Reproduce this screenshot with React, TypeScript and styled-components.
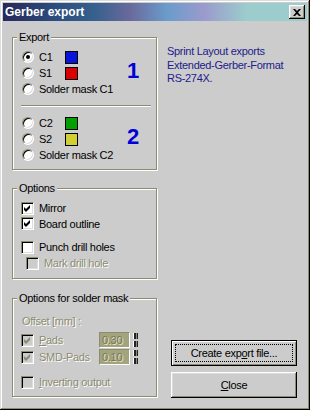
import React from 'react';
import styled, { createGlobalStyle } from 'styled-components';

const face = '#cccccc';
const shade = '#8c8c70';
const hilite = '#ffffff';

const GlobalStyle = createGlobalStyle`
  html, body {
    margin: 0;
    padding: 0;
    background: ${face};
  }
  body {
    font-family: "Liberation Sans", Arial, sans-serif;
    font-size: 11px;
    color: #000;
  }
`;

const Window = styled.div`
  width: 310px;
  height: 410px;
  box-sizing: border-box;
  padding: 3px;
  display: flex;
  flex-direction: column;
  background: ${face};
  box-shadow: inset -1px -1px 0 #000, inset 1px 1px 0 #dcdcdc,
    inset -2px -2px 0 ${shade}, inset 2px 2px 0 ${hilite};
  letter-spacing: -0.3px;
`;

const TitleBar = styled.div`
  height: 18px;
  flex: none;
  display: flex;
  align-items: center;
  justify-content: space-between;
  padding: 0 2px 0 2px;
  background: linear-gradient(
    90deg,
    #28285a 0%,
    #2c4f80 18%,
    #36608e 30%,
    #6a6a9c 42%,
    #6a9ccc 54%,
    #9a9acc 66%,
    #9ccccc 80%,
    #9ccccc 100%
  );
`;

const Title = styled.span`
  color: #fff;
  font-weight: bold;
  font-size: 12px;
  letter-spacing: 0;
`;

const CloseBox = styled.span`
  width: 16px;
  height: 14px;
  display: flex;
  align-items: center;
  justify-content: center;
  background: ${face};
  box-shadow: inset -1px -1px 0 #000, inset 1px 1px 0 ${hilite},
    inset -2px -2px 0 ${shade}, inset 2px 2px 0 #dcdcdc;
`;

const Body = styled.div`
  flex: 1;
  display: flex;
  padding: 10px 0 9px 9px;
  min-height: 0;
`;

const LeftCol = styled.div`
  width: 145px;
  display: flex;
  flex-direction: column;
`;

const Group = styled.fieldset<{ $top?: number }>`
  margin: ${p => p.$top ?? 0}px 0 0 0;
  padding: 0;
  min-width: 0;
  border: 1px solid ${shade};
  box-shadow: inset 1px 1px 0 ${hilite}, 1px 1px 0 ${hilite};
`;

const Legend = styled.legend`
  margin-left: 4px;
  padding: 0 2px;
  line-height: 13px;
  background: ${face};
`;

const Inner = styled.div<{ $pad: string }>`
  padding: ${p => p.$pad};
  display: flex;
  flex-direction: column;
`;

const Section = styled.div`
  display: flex;
`;

const List = styled.div`
  flex: 1;
  display: flex;
  flex-direction: column;
`;

const BigNum = styled.div`
  width: 24px;
  margin-right: 6px;
  padding-top: 11px;
  font-size: 22px;
  font-weight: bold;
  line-height: 22px;
  text-align: center;
  color: #0000d8;
  letter-spacing: 0;
`;

const Divider = styled.div`
  margin: 8px 0 8px -1px;
  border-top: 1px solid ${shade};
  border-bottom: 1px solid ${hilite};
`;

const Row = styled.div<{ $h?: number; $mt?: number; $indent?: number }>`
  height: ${p => p.$h ?? 16}px;
  margin-top: ${p => p.$mt ?? 0}px;
  padding-left: ${p => p.$indent ?? 0}px;
  display: flex;
  align-items: center;
  white-space: nowrap;
`;

const Radio = styled.span<{ $checked?: boolean }>`
  width: 12px;
  height: 12px;
  flex: none;
  box-sizing: border-box;
  border-radius: 50%;
  background: #fff;
  border: 1px solid;
  border-color: ${shade} ${hilite} ${hilite} ${shade};
  box-shadow: inset 1px 1px 0 #000, inset -1px -1px 0 #dcdcdc;
  display: flex;
  align-items: center;
  justify-content: center;

  &::after {
    content: '';
    width: 4px;
    height: 4px;
    border-radius: 50%;
    background: #000;
    display: ${p => (p.$checked ? 'block' : 'none')};
  }
`;

const Box = styled.span<{ $disabled?: boolean }>`
  width: 13px;
  height: 13px;
  flex: none;
  box-sizing: border-box;
  background: ${p => (p.$disabled ? face : '#fff')};
  border: 1px solid;
  border-color: ${shade} ${hilite} ${hilite} ${shade};
  box-shadow: inset 1px 1px 0 #000, inset -1px -1px 0 #dcdcdc;
  display: flex;
  align-items: center;
  justify-content: center;
`;

const Label = styled.span<{ $disabled?: boolean; $w?: number }>`
  margin-left: 5px;
  width: ${p => (p.$w ? `${p.$w}px` : 'auto')};
  flex: none;
  color: ${p => (p.$disabled ? shade : '#000')};
  text-shadow: ${p => (p.$disabled ? `1px 1px 0 ${hilite}` : 'none')};
`;

const Plain = styled.span<{ $disabled?: boolean }>`
  color: ${p => (p.$disabled ? shade : '#000')};
  text-shadow: ${p => (p.$disabled ? `1px 1px 0 ${hilite}` : 'none')};
`;

const Swatch = styled.span<{ $color: string }>`
  width: 13px;
  height: 13px;
  box-sizing: border-box;
  border: 1px solid #000;
  background: ${p => p.$color};
`;

const Field = styled.span`
  width: 31px;
  height: 16px;
  box-sizing: border-box;
  border: 1px solid;
  border-color: ${shade} ${hilite} ${hilite} ${shade};
  background: #a4a47c;
  padding-left: 2px;
  display: flex;
  align-items: center;
  color: #76765a;
  text-shadow: 1px 1px 0 #e4e4d0;
`;

const Spin = styled.span`
  margin-left: 3px;
  width: 5px;
  height: 14px;
  display: flex;
  flex-direction: column;
  gap: 2px;
`;

const SpinHalf = styled.span`
  flex: 1;
  background: linear-gradient(90deg, #fff 0 1px, #222 1px 3px, ${shade} 3px 4px, #222 4px 5px);
`;

const RightCol = styled.div`
  flex: 1;
  display: flex;
  flex-direction: column;
  padding: 14px 9px 0 10px;
`;

const Info = styled.div`
  color: #20208c;
  line-height: 13.5px;
  white-space: nowrap;
`;

const Button = styled.button<{ $default?: boolean }>`
  width: 126px;
  height: 26px;
  margin-left: 4px;
  padding: 3px;
  box-sizing: border-box;
  display: flex;
  font: inherit;
  letter-spacing: inherit;
  color: #000;
  background: ${face};
  border: ${p => (p.$default ? '1px solid #000' : 'none')};
  box-shadow: ${p =>
    p.$default
      ? `inset 1px 1px 0 ${hilite}, inset -1px -1px 0 ${shade}`
      : `inset -1px -1px 0 #000, inset 1px 1px 0 ${hilite}, inset -2px -2px 0 ${shade}, inset 2px 2px 0 #dcdcdc`};
`;

const ButtonFace = styled.span<{ $focus?: boolean }>`
  flex: 1;
  display: flex;
  align-items: center;
  justify-content: center;
  border: 1px dotted ${p => (p.$focus ? '#000' : 'transparent')};
`;

const Buttons = styled.div`
  margin-top: auto;
  display: flex;
  flex-direction: column;
  gap: 6px;
`;

function Check({ disabled }: { disabled?: boolean }) {
  return (
    <svg width="7" height="7" viewBox="0 0 7 7">
      <path d="M0 2 L2 4 L6 0 L6 3 L2 7 L0 5 Z" fill={disabled ? shade : '#000'} />
    </svg>
  );
}

function RadioRow({ label, checked, color }: { label: string; checked?: boolean; color?: string }) {
  return (
    <Row>
      <Radio $checked={checked} />
      <Label $w={color ? 26 : undefined}>{label}</Label>
      {color && <Swatch $color={color} />}
    </Row>
  );
}

export default function App() {
  return (
    <>
      <GlobalStyle />
      <Window>
        <TitleBar>
          <Title>Gerber export</Title>
          <CloseBox>
            <svg width="8" height="7" viewBox="0 0 8 7">
              <path d="M0 0 L2 0 L4 2 L6 0 L8 0 L5 3.5 L8 7 L6 7 L4 5 L2 7 L0 7 L3 3.5 Z" fill="#000" />
            </svg>
          </CloseBox>
        </TitleBar>
        <Body>
          <LeftCol>
            <Group>
              <Legend>Export</Legend>
              <Inner $pad="5px 5px 6px 9px">
                <Section>
                  <List>
                    <RadioRow label="C1" checked color="#0814d8" />
                    <RadioRow label="S1" color="#d80000" />
                    <RadioRow label="Solder mask C1" />
                  </List>
                  <BigNum>1</BigNum>
                </Section>
                <Divider />
                <Section>
                  <List>
                    <RadioRow label="C2" color="#00a000" />
                    <RadioRow label="S2" color="#d0d034" />
                    <RadioRow label="Solder mask C2" />
                  </List>
                  <BigNum>2</BigNum>
                </Section>
              </Inner>
            </Group>

            <Group $top={12}>
              <Legend>Options</Legend>
              <Inner $pad="5px 5px 7px 8px">
                <Row $h={16}>
                  <Box><Check /></Box>
                  <Label>Mirror</Label>
                </Row>
                <Row $h={15}>
                  <Box><Check /></Box>
                  <Label>Board outline</Label>
                </Row>
                <Row $mt={8}>
                  <Box />
                  <Label>Punch drill holes</Label>
                </Row>
                <Row $indent={5}>
                  <Box $disabled />
                  <Label $disabled>Mark drill hole</Label>
                </Row>
              </Inner>
            </Group>

            <Group $top={13}>
              <Legend>Options for solder mask</Legend>
              <Inner $pad="8px 5px 6px 8px">
                <Row $indent={1}>
                  <Plain $disabled>Offset [mm] :</Plain>
                </Row>
                <Row $mt={3}>
                  <Box $disabled><Check disabled /></Box>
                  <Label $disabled $w={60}><u>P</u>ads</Label>
                  <Field>0.30</Field>
                  <Spin><SpinHalf /><SpinHalf /></Spin>
                </Row>
                <Row $mt={1}>
                  <Box $disabled><Check disabled /></Box>
                  <Label $disabled $w={60}>SMD-Pads</Label>
                  <Field>0.10</Field>
                  <Spin><SpinHalf /><SpinHalf /></Spin>
                </Row>
                <Row $mt={9}>
                  <Box $disabled />
                  <Label $disabled><u>I</u>nverting output</Label>
                </Row>
              </Inner>
            </Group>
          </LeftCol>

          <RightCol>
            <Info>
              Sprint Layout exports
              <br />
              Extended-Gerber-Format
              <br />
              RS-274X.
            </Info>
            <Buttons>
              <Button $default>
                <ButtonFace $focus>Create exp<u>o</u>rt file...</ButtonFace>
              </Button>
              <Button>
                <ButtonFace><u>C</u>lose</ButtonFace>
              </Button>
            </Buttons>
          </RightCol>
        </Body>
      </Window>
    </>
  );
}
